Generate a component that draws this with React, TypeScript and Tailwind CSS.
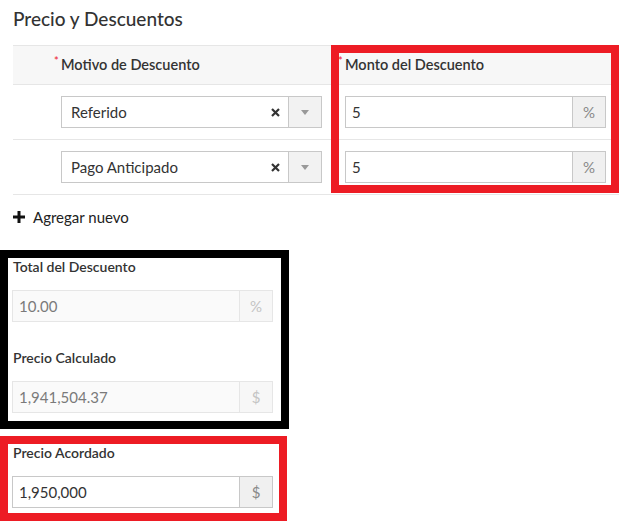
type Discount = {
  reason: string;
  amount: string;
};

const discounts: Discount[] = [
  { reason: "Referido", amount: "5" },
  { reason: "Pago Anticipado", amount: "5" },
];

function Req() {
  return (
    <span className="absolute -left-[7px] -top-[1px] text-[11px] leading-none text-[#ee3344]">
      *
    </span>
  );
}

function SelectBox({ value }: { value: string }) {
  return (
    <div className="flex h-[32px] w-[261px] border border-[#c8c8c8] bg-white">
      <div className="flex flex-1 items-center px-[9px] text-[15px] text-[#333]">
        {value}
      </div>
      <div className="flex w-[26px] items-center justify-center">
        <svg width="9" height="9" viewBox="0 0 9 9">
          <path d="M1 1 L8 8 M8 1 L1 8" stroke="#333" strokeWidth="2.2" />
        </svg>
      </div>
      <div className="flex w-[33px] items-center justify-center border-l border-[#c8c8c8] bg-[#f2f2f2]">
        <svg width="8" height="5" viewBox="0 0 8 5">
          <path d="M0 0 H8 L4 5 Z" fill="#999" />
        </svg>
      </div>
    </div>
  );
}

function AddonInput({
  value,
  addon,
  disabled,
}: {
  value: string;
  addon: string;
  disabled?: boolean;
}) {
  return (
    <div
      className={
        disabled
          ? "flex h-[32px] w-[261px] border border-[#e6e6e6] bg-[#fafafa]"
          : "flex h-[32px] w-[261px] border border-[#c8c8c8] bg-white"
      }
    >
      <div
        className={
          disabled
            ? "flex flex-1 items-center px-[6px] text-[15px] text-[#7a7a7a]"
            : "flex flex-1 items-center px-[6px] text-[15px] text-[#333]"
        }
      >
        {value}
      </div>
      <div
        className={
          disabled
            ? "flex w-[33px] items-center justify-center border-l border-[#e6e6e6] bg-[#f7f7f7] text-[15px] text-[#c4c4c4]"
            : "flex w-[33px] items-center justify-center border-l border-[#c8c8c8] bg-[#f0f0f0] text-[15px] text-[#888]"
        }
      >
        {addon}
      </div>
    </div>
  );
}

export default function App() {
  return (
    <div className="h-[523px] w-[622px] overflow-hidden bg-white font-['Lato',sans-serif] text-[#333]">
      <h2 className="pl-[13px] pt-[6px] text-[19px] font-medium leading-[26px] text-[#333]">
        Precio y Descuentos
      </h2>

      <div className="relative ml-[13px] mt-[13px] w-[606px]">
        <div className="flex h-[40px] items-center border-y border-[#e6e6e6] bg-[#f7f7f7] text-[14.5px] font-semibold text-[#333]">
          <div className="w-[332px] pl-[48px]">
            <span className="relative">
              <Req />
              Motivo de Descuento
            </span>
          </div>
          <div>
            <span className="relative">
              <Req />
              Monto del Descuento
            </span>
          </div>
        </div>
        {discounts.map((d) => (
          <div
            key={d.reason}
            className="flex gap-[23px] border-b border-[#e6e6e6] pb-[11px] pl-[48px] pt-[11px]"
          >
            <SelectBox value={d.reason} />
            <AddonInput value={d.amount} addon="%" />
          </div>
        ))}
        <div className="pointer-events-none absolute left-[318px] top-0 h-[148px] w-[288px] border-[8px] border-[#ed1c24]" />
      </div>

      <div className="mt-[12px] flex h-[20px] items-center gap-[8px] pl-[13px] text-[15px] text-[#222]">
        <svg width="12" height="12" viewBox="0 0 12 12">
          <path d="M6 0 V12 M0 6 H12" stroke="#111" strokeWidth="3" />
        </svg>
        Agregar nuevo
      </div>

      <div className="mt-[23px] w-[289px] border-[8px] border-black pb-[8px] pl-[4px]">
        <div className="pl-[1px] text-[14px] font-semibold leading-[18px] text-[#333]">
          Total del Descuento
        </div>
        <div className="mt-[14px]">
          <AddonInput value="10.00" addon="%" disabled />
        </div>
        <div className="mt-[27px] pl-[1px] text-[14px] font-semibold leading-[18px] text-[#333]">
          Precio Calculado
        </div>
        <div className="mt-[14px]">
          <AddonInput value="1,941,504.37" addon="$" disabled />
        </div>
      </div>

      <div className="mt-[7px] w-[287px] border-[8px] border-[#ed1c24] pb-[5px] pl-[4px]">
        <div className="pl-[1px] text-[14px] font-semibold leading-[18px] text-[#333]">
          Precio Acordado
        </div>
        <div className="mt-[14px]">
          <AddonInput value="1,950,000" addon="$" />
        </div>
      </div>
    </div>
  );
}
